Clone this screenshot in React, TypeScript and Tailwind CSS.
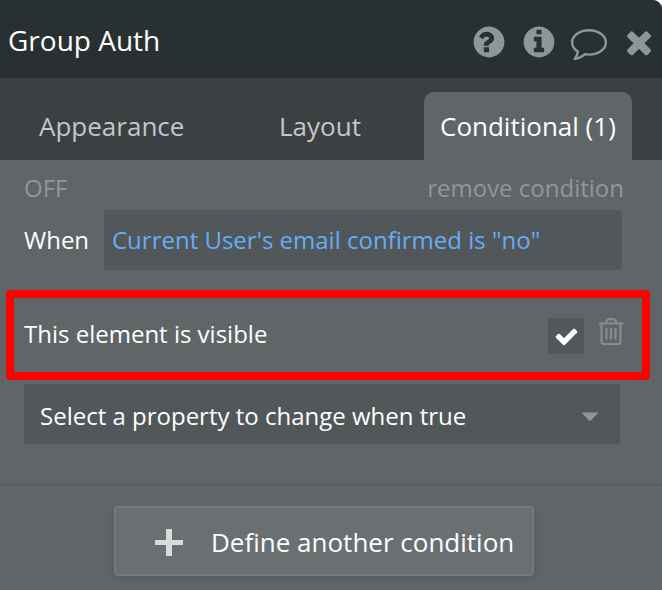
import type { ReactNode } from 'react';

function Glyph({ className, d }: { className: string; d: string }) {
  return (
    <svg viewBox="0 0 1792 1792" fill="currentColor" className={`block shrink-0 ${className}`} aria-hidden="true">
      <path d={d} />
    </svg>
  );
}

const DISC = 'M1664 896q0 209-103 385.500t-279.500 279.500-385.500 103-385.500-103-279.500-279.500-103-385.500 103-385.500 279.500-279.500 385.500-103 385.500 103 279.500 279.500 103 385.500z';
const QUESTION =
  'M896 1376v-192q0-14-9-23t-23-9h-192q-14 0-23 9t-9 23v192q0 14 9 23t23 9h192q14 0 23-9t9-23zM1152 704q0-88-55.500-163t-138.500-116-170-41q-243 0-371 213-15 24 8 42l132 100q7 6 19 6 16 0 25-12 53-68 86-92 34-24 86-24 48 0 85.500 26t37.500 59q0 38-20 61t-68 45q-63 28-115.500 86.500t-52.500 125.500v36q0 14 9 23t23 9h192q14 0 23-9t9-23q0-19 21.500-49.500t54.500-49.500q32-18 49-28.500t46-35 44.500-48 28-60.500 12.500-81z';
const INFO =
  'M1152 1376v-160q0-14-9-23t-23-9h-96v-512q0-14-9-23t-23-9h-320q-14 0-23 9t-9 23v160q0 14 9 23t23 9h96v320h-96q-14 0-23 9t-9 23v160q0 14 9 23t23 9h448q14 0 23-9t9-23zM1024 480v-160q0-14-9-23t-23-9h-192q-14 0-23 9t-9 23v160q0 14 9 23t23 9h192q14 0 23-9t9-23z';
const TIMES =
  'M1490 1322q0 40-28 68l-136 136q-28 28-68 28t-68-28l-294-294-294 294q-28 28-68 28t-68-28l-136-136q-28-28-28-68t28-68l294-294-294-294q-28-28-28-68t28-68l136-136q28-28 68-28t68 28l294 294 294-294q28-28 68-28t68 28l136 136q28 28 28 68t-28 68l-294 294 294 294q28 28 28 68z';
const CHECK =
  'M1671 566q0 40-28 68l-724 724-136 136q-28 28-68 28t-68-28l-136-136-362-362q-28-28-28-68t28-68l136-136q28-28 68-28t68 28l294 295 656-657q28-28 68-28t68 28l136 136q28 28 28 68z';

function DiscGlyph({ d, className }: { d: string; className: string }) {
  return (
    <svg viewBox="0 0 1792 1792" className={`block size-9 shrink-0 ${className}`} aria-hidden="true">
      <path d={DISC} fill="currentColor" />
      <path d={d} fill="#293032" />
    </svg>
  );
}

function Tab({ className, children }: { className: string; children: ReactNode }) {
  return <div className={`flex h-[68px] items-center text-[26px] ${className}`}>{children}</div>;
}

export default function App() {
  return (
    <div className="h-[590px] w-[662px] overflow-hidden bg-white font-['Open_Sans',sans-serif] whitespace-nowrap text-white">
      <div className="flex h-full flex-col rounded-tr-[9px] bg-[#606568]">
        <header className="flex h-[78px] shrink-0 items-center rounded-tr-[9px] bg-[#293032] pl-2 text-[28px]">
          <h1 className="grow pt-px leading-none">Group Auth</h1>
          <div className="flex h-full items-start text-[#8c979b]">
            <DiscGlyph d={QUESTION} className="mt-6 mr-[14px]" />
            <DiscGlyph d={INFO} className="mt-6 mr-[13px]" />
            <svg viewBox="0 0 38 34" className="mt-7 mr-[13px] block h-[34px] w-[38px] shrink-0" fill="none" stroke="currentColor" strokeWidth="2.400" strokeLinejoin="round" aria-hidden="true">
              <path d="M19 2.200C28.400 2.200 35.900 7.700 35.900 14.400S28.400 26.600 19 26.600C17.600 26.600 16.200 26.500 14.900 26.200C12 28.900 8.500 30.600 4.600 31C6.300 29.200 7.400 26.900 7.900 23.500C4.300 21.300 2.100 18 2.100 14.400C2.100 7.700 9.600 2.200 19 2.200Z" />
            </svg>
            <Glyph d={TIMES} className="mt-6 mr-[5px] size-9" />
          </div>
        </header>

        <nav className="flex h-[82px] shrink-0 items-end bg-[#3c4042] text-[#c5c6c6]">
          <Tab className="w-[240px] pl-[39px]">Appearance</Tab>
          <Tab className="w-[184px] pl-[39px]">Layout</Tab>
          <Tab className="w-[208px] rounded-t-[10px] bg-[#606568] pl-4 text-white">Conditional (1)</Tab>
        </nav>

        <main className="flex grow flex-col text-[24px]">
          <div className="flex h-[50px] items-center justify-between pt-[6px] pr-[38px] pl-6 text-[#92969a]">
            <span>OFF</span>
            <span>remove condition</span>
          </div>

          <div className="flex h-[60px] items-center pl-6">
            <span className="w-20">When</span>
            <div className="flex h-full w-[518px] items-center rounded-[2px] bg-[#525759] pl-2 text-[#65adf8]">
              Current User's email confirmed is "no"
            </div>
          </div>

          <div className="mt-5 ml-[6px] flex h-[90px] w-[644px] items-center rounded-[4px] border-8 border-[#ff0000] pl-[10px]">
            <span className="grow pb-[2px]">This element is visible</span>
            <div className="mt-[2px] flex size-9 items-center justify-center rounded-[2px] bg-[#525759]">
              <Glyph d={CHECK} className="size-[25px]" />
            </div>
            <svg viewBox="0 0 26 28" className="mr-[18px] mb-[6px] ml-[14px] block h-7 w-[26px] shrink-0 text-[#878c90]" fill="none" stroke="currentColor" strokeWidth="2.200" aria-hidden="true">
              <path d="M.8 5.500H25.500M7.500 5.500L9 2.100Q9.400 1.100 10.500 1.100H15.700Q16.800 1.100 17.200 2.100L18.700 5.500M3.500 5.500V24Q3.500 26 5.500 26H20.500Q22.500 26 22.500 24V5.500" />
              <path d="M8.500 10V21.500M13 10V21.500M17.500 10V21.500" />
            </svg>
          </div>

          <div className="mt-1 ml-6 flex h-[60px] w-[596px] items-center justify-between rounded-[2px] bg-[#525759] pr-[21px] pl-4">
            <span className="pt-1">Select a property to change when true</span>
            <svg viewBox="0 0 18 10" className="mt-[5px] block h-[10px] w-[18px]" fill="#8f979b" aria-hidden="true">
              <path d="M1.500.5H16.500Q17.500.5 16.800 1.300L9.700 8.800Q9 9.500 8.300 8.800L1.200 1.300Q.5.500 1.500.5Z" />
            </svg>
          </div>

          <div className="mt-10 flex grow border-t-2 border-[#5a5f62] pt-5 pl-[114px]">
            <button className="flex h-[70px] w-[420px] items-center rounded-[4px] border-2 border-[#74797b] bg-[#6a6f71] pt-[2px] pl-[39px] text-[26px] shadow-[0_2px_8px_rgba(0,0,0,0.1)]">
              <svg viewBox="0 0 28 28" className="mr-7 block size-7 shrink-0" fill="#d9dada" aria-hidden="true">
                <path d="M11 1H17V12H28V17H17V28H11V17H0V12H11Z" />
              </svg>
              Define another condition
            </button>
          </div>
        </main>
      </div>
    </div>
  );
}
